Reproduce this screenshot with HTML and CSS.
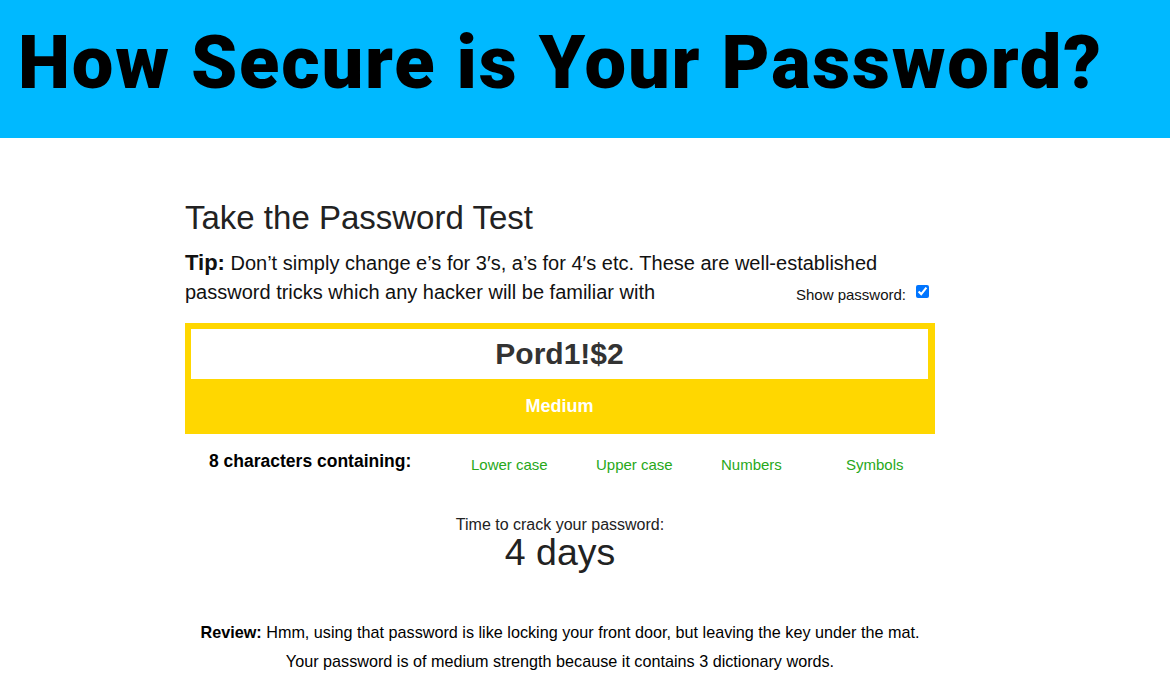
FILE: index.html
```html
<!DOCTYPE html>
<html>
<head>
<meta charset="utf-8">
<link rel="stylesheet" href="styles.css">
</head>
<body>
<header class="banner">
  <h1 class="banner-title">How Secure is Your Password?</h1>
</header>
<main class="container">
  <h2 class="test-title">Take the Password Test</h2>
  <p class="tip"><strong>Tip:</strong> Don’t simply change e’s for 3′s, a’s for 4′s etc. These are well-established password tricks which any hacker will be familiar with<label class="show">Show password: <input type="checkbox" checked class="show-box"></label></p>
  <div class="meter">
    <div class="pw-field">Pord1!$2</div>
    <div class="strength">Medium</div>
  </div>
  <div class="criteria">
    <div class="count">8 characters containing:</div>
    <div class="crit">Lower case</div>
    <div class="crit">Upper case</div>
    <div class="crit">Numbers</div>
    <div class="crit">Symbols</div>
  </div>
  <div class="crack">
    <div class="crack-label">Time to crack your password:</div>
    <div class="crack-time">4 days</div>
  </div>
  <div class="review">
    <p><strong>Review:</strong> Hmm, using that password is like locking your front door, but leaving the key under the mat.</p>
    <p>Your password is of medium strength because it contains 3 dictionary words.</p>
  </div>
</main>
</body>
</html>
```
FILE: styles.css
```css
* { box-sizing: border-box; }
html, body { margin: 0; padding: 0; background: #fff; }
body { font-family: "Liberation Sans", Arial, sans-serif; color: #000; }

.banner {
  background: #00b9ff;
  height: 138px;
  display: flex;
  align-items: center;
  padding-left: 18px;
}
.banner-title {
  margin: 0;
  font-family: "Roboto", "Liberation Sans", sans-serif;
  font-weight: 900;
  font-size: 74px;
  letter-spacing: 1.8px;
  color: #000;
  line-height: 1;
  padding-bottom: 12px;
}

.container {
  width: 750px;
  margin-left: 185px;
  padding-top: 60px;
}
.test-title {
  margin: 0;
  font-weight: normal;
  font-size: 33px;
  color: #222;
  line-height: 40px;
}
.tip {
  margin: 10px 0 0;
  font-size: 20px;
  line-height: 29px;
  color: #111;
}
.tip strong { font-size: 22px; }
.show {
  float: right;
  font-size: 15px;
  line-height: 18px;
  white-space: nowrap;
  display: flex;
  align-items: center;
  gap: 10px;
  padding-top: 8px;
  margin-right: 6px;
}
.show-box { margin: 0; width: 13px; height: 13px; position: relative; top: -4px; }

.meter {
  margin-top: 16px;
  background: #ffd700;
  padding: 6px 7px 0 6px;
  height: 111px;
}
.pw-field {
  background: #fff;
  height: 50px;
  display: flex;
  align-items: center;
  justify-content: center;
  font-weight: bold;
  font-size: 30px;
  color: #333;
}
.strength {
  height: 55px;
  display: flex;
  align-items: center;
  justify-content: center;
  color: #fff;
  font-weight: bold;
  font-size: 18px;
}

.criteria {
  display: flex;
  align-items: center;
  margin-top: 18px;
  height: 24px;
}
.count {
  font-weight: bold;
  font-size: 17.5px;
  width: 286px;
  flex-shrink: 0;
  padding-left: 24px;
  position: relative;
  top: -3px;
}
.crit {
  color: #27a81a;
  font-size: 15px;
  width: 125px;
  flex-shrink: 0;
}
.crit:last-child { width: auto; }

.crack {
  margin-top: 40px;
  text-align: center;
  color: #222;
}
.crack-label { font-size: 16px; line-height: 18px; }
.crack-time { font-size: 37.5px; line-height: 36px; }

.review {
  margin-top: 48px;
  text-align: center;
  font-size: 16.2px;
}
.review p { margin: 0; line-height: 29px; }
```
